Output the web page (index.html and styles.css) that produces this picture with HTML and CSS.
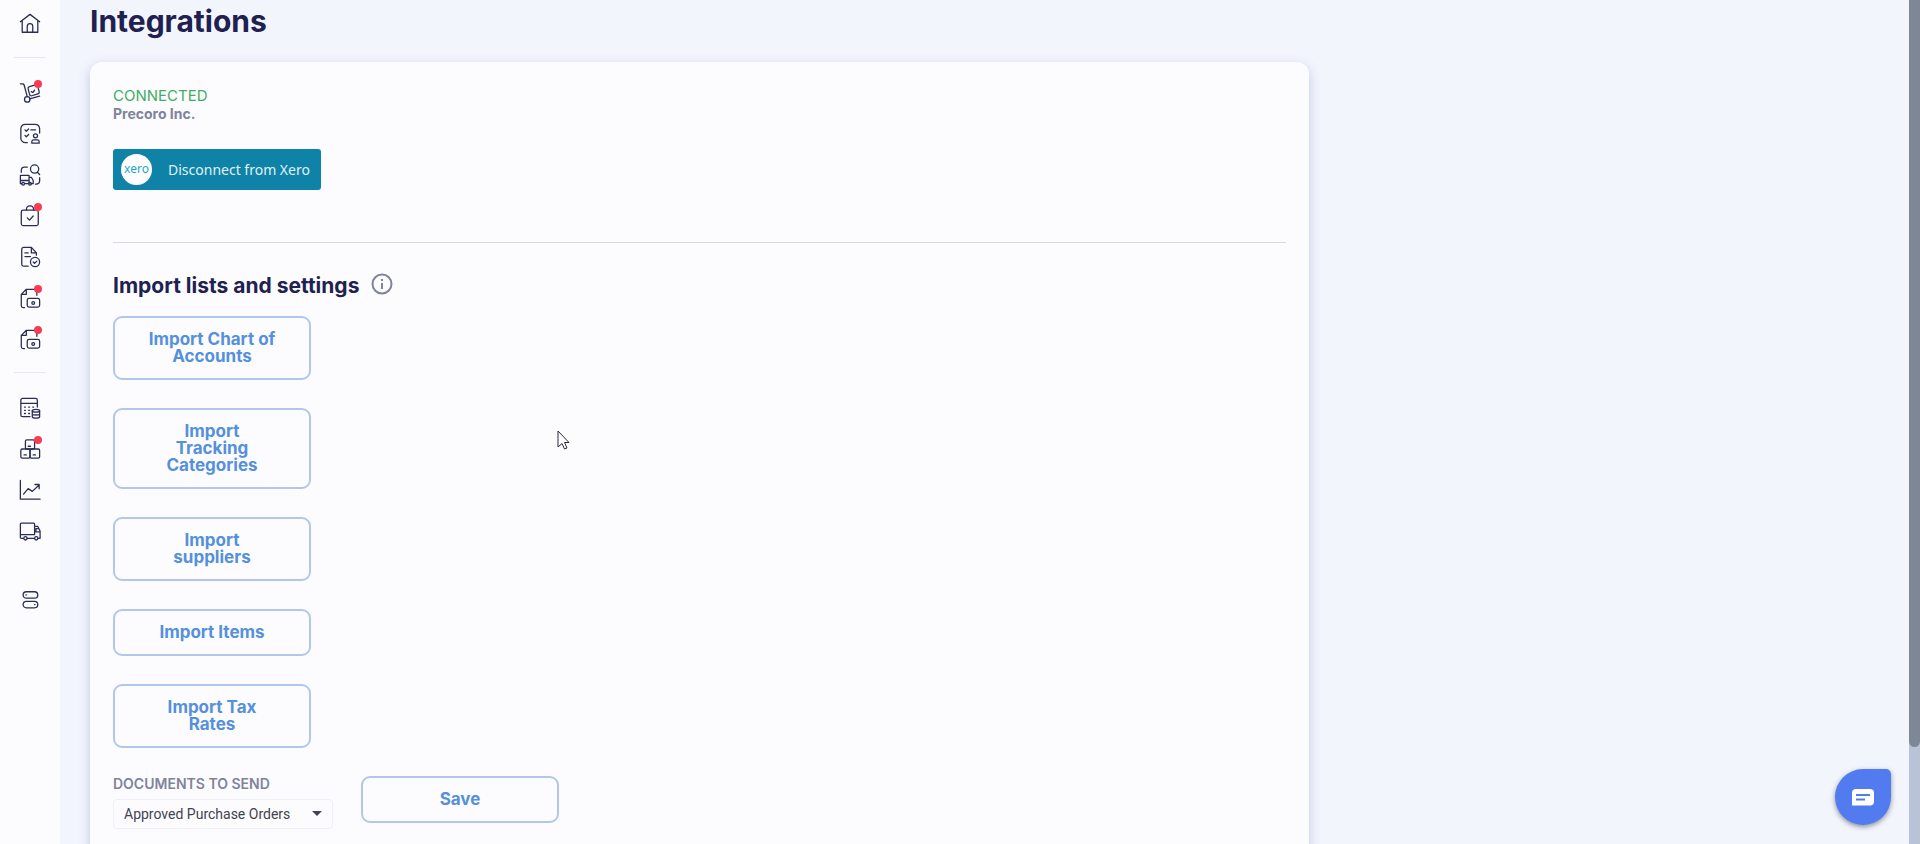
FILE: index.html
```
<!DOCTYPE html>
<html lang="en">
<head>
    <meta charset="UTF-8">
    <title>Integrations</title>
    <link rel="stylesheet" href="styles.css">
</head>
<body>
<div class="layout">

    <!-- Side menu -->
    <nav class="sidebar" aria-label="Main menu">
        <div class="menu-group">
            <a class="menu-link" href="#home" aria-label="Home">
                <svg viewBox="0 0 24 24"><path d="M1.500 9.500 12 1.500l10.500 8M3.500 8.500V21h17V8.500M9 21V14.500a3 3 0 0 1 6 0V21"/></svg>
            </a>
        </div>
        <div class="menu-group">
            <a class="menu-link" href="#requests" aria-label="Purchase requests">
                <svg viewBox="0 0 24 24"><path d="M1.500 2H4a1.500 1.500 0 0 1 1.500 1L9 16M22.500 15.500l-11 3M17 3.500l-5.500 1.500a2 2 0 0 0-1.500 2.500l1.500 6a2 2 0 0 0 2.500 1.500l6.500-2a2 2 0 0 0 1.500-2.500L21 7M13.500 10.500l1.500 1 2-2.500"/><circle cx="9" cy="19" r="3"/></svg>
                <span class="dot"></span>
            </a>
            <a class="menu-link" href="#approvals" aria-label="Approvals">
                <svg viewBox="0 0 24 24"><path d="M9 21.500H7A5 5 0 0 1 2 16.500V6A5 5 0 0 1 7 1.500h10.500a5 5 0 0 1 5 4.500v5M6.500 7.500 8 9l2.500-2.500M6.500 13.500 8 15l2.500-2.500M13 7.500h5"/><circle cx="18" cy="14" r="2.200"/><path d="M14 22v-1.500a2 2 0 0 1 2-2h4a2 2 0 0 1 2 2V22z"/></svg>
            </a>
            <a class="menu-link" href="#sourcing" aria-label="Sourcing">
                <svg viewBox="0 0 24 24"><circle cx="17" cy="5.500" r="4.500"/><path d="M20 9l2.500 2.500M2.500 9V7A3.500 3.500 0 0 1 6 3.500h3M22.500 15v3.500a3.500 3.500 0 0 1-3.500 3.500h-1M3 21.500H1.500v-9H11v9H6.500M11 14.500h2.500l2 3.500v3.500H13M1.500 18H11"/><circle cx="4.500" cy="21.500" r="1.500"/><circle cx="12" cy="21.500" r="1.500"/></svg>
            </a>
            <a class="menu-link" href="#orders" aria-label="Purchase orders">
                <svg viewBox="0 0 24 24"><rect x="2.500" y="5.500" width="18.500" height="17" rx="2"/><path d="M8 5.500C8 3 9 1 12 1s4 2 4 4.500M9 14l2.500 2.500L15.500 12"/></svg>
                <span class="dot"></span>
            </a>
            <a class="menu-link" href="#receipts" aria-label="Receipts">
                <svg viewBox="0 0 24 24"><path d="M10 22H5a2 2 0 0 1-2-2V3.500a2 2 0 0 1 2-2h8.500L19 7.500V10M13.500 2v5.500H19M6.500 7.500H10M6.500 11.500h6"/><circle cx="17.500" cy="17.500" r="5"/><path d="M15.500 17.500l1.500 1.500 2.500-2.500"/></svg>
            </a>
            <a class="menu-link" href="#invoices" aria-label="Invoices">
                <svg viewBox="0 0 24 24"><path d="M6 22.500H4.500a2 2 0 0 1-2-2V8L8 2.500h9.500a2 2 0 0 1 2 2V9M2.500 8H8V3"/><rect x="9" y="12.500" width="13.500" height="9.500" rx="2"/><circle cx="15.500" cy="17.500" r="1.500"/></svg>
                <span class="dot"></span>
            </a>
            <a class="menu-link" href="#expenses" aria-label="Expenses">
                <svg viewBox="0 0 24 24"><path d="M6 22.500H4.500a2 2 0 0 1-2-2V8L8 2.500h9.500a2 2 0 0 1 2 2V9M2.500 8H8V3"/><rect x="9" y="12.500" width="13.500" height="9.500" rx="2"/><circle cx="15.500" cy="17.500" r="1.500"/></svg>
                <span class="dot"></span>
            </a>
        </div>
        <div class="menu-group">
            <a class="menu-link" href="#budgets" aria-label="Budgets">
                <svg viewBox="0 0 24 24"><path d="M12 21.500H4a2 2 0 0 1-2-2V3.500a2 2 0 0 1 2-2h14a2 2 0 0 1 2 2V11M2 7h18M6 11h1M10.500 11h1M15 11h1M6 14.500h1M10.500 14.500h1M6 18h1M10.500 18h1"/><ellipse cx="18.500" cy="15" rx="4" ry="1.500"/><path d="M14.500 15v6.500c0 2 8 2 8 0V15M14.500 18.500c0 1.500 8 1.500 8 0"/></svg>
            </a>
            <a class="menu-link" href="#inventory" aria-label="Inventory">
                <svg viewBox="0 0 24 24"><rect x="7" y="2" width="10" height="10" rx="1.500"/><rect x="2" y="12" width="10" height="10" rx="1.500"/><rect x="12" y="12" width="10.500" height="10" rx="1.500"/><path d="M10 9h2.500M5.500 18.500H8M15.500 18.500H18"/></svg>
                <span class="dot"></span>
            </a>
            <a class="menu-link" href="#reports" aria-label="Reports">
                <svg viewBox="0 0 24 24"><path d="M1.500 1.500V22H23M5 16.500l5-6 4.500 3L22 6.500M17.500 6H22v4.500"/></svg>
            </a>
            <a class="menu-link" href="#suppliers" aria-label="Suppliers">
                <svg viewBox="0 0 24 24"><path d="M4.500 20h-2a1 1 0 0 1-1-1V4.500a1 1 0 0 1 1-1H16a1 1 0 0 1 1 1V16M1.500 16H17M9 20h7.500M17 7h3.500l2.500 5v8h-2M23 13h-4.500V9.500H21"/><circle cx="7" cy="20" r="1.800"/><circle cx="18.800" cy="20" r="1.800"/></svg>
            </a>
        </div>
        <div class="menu-group last">
            <a class="menu-link" href="#settings" aria-label="Configuration">
                <svg viewBox="0 0 24 24"><rect x="4.500" y="3" width="16" height="7" rx="3.500"/><rect x="4.500" y="13.500" width="16" height="7" rx="3.500"/><path d="M7.500 6.500h.500M17 17h.500"/></svg>
            </a>
        </div>
    </nav>

    <!-- Page content -->
    <main class="content">
        <h1 class="title">Integrations</h1>

        <section class="card">
            <div class="status">Connected</div>
            <div class="company">Precoro Inc.</div>
            <button class="xero-btn" type="button">
                <span class="xero-logo">xero</span>
                <span>Disconnect from Xero</span>
            </button>

            <hr class="line">

            <div class="heading">
                <h2>Import lists and settings</h2>
                <svg class="info" viewBox="0 0 22 22"><circle cx="11" cy="11" r="9.500"/><path d="M11 10v6M11 6v2"/></svg>
            </div>

            <div class="imports">
                <button class="btn" type="button">Import Chart of Accounts</button>
                <button class="btn" type="button">Import Tracking Categories</button>
                <button class="btn" type="button">Import suppliers</button>
                <button class="btn" type="button">Import Items</button>
                <button class="btn" type="button">Import Tax Rates</button>
            </div>

            <form class="documents">
                <div class="field">
                    <label for="documents">Documents to send</label>
                    <div class="select-box">
                        <select id="documents">
                            <option>Approved Purchase Orders</option>
                        </select>
                        <svg class="arrow" viewBox="0 0 10 5"><path d="M0 0h10L5 5z"/></svg>
                    </div>
                </div>
                <button class="btn" type="button">Save</button>
            </form>
        </section>
    </main>

    <div class="scrollbar"><div class="thumb"></div></div>
</div>

<!-- Chat widget -->
<button class="chat" type="button" aria-label="Open chat">
    <svg viewBox="0 0 22 17"><path class="bubble" d="M4 0h14a4 4 0 0 1 4 4v8.500a4 4 0 0 1-4 4H0V4a4 4 0 0 1 4-4z"/><path class="lines" d="M4 6h14M4 10.500h9"/></svg>
</button>

<!-- Mouse pointer -->
<svg class="pointer" viewBox="0 0 13 20"><path d="M1 1v16l4-3.500L7.500 19l2.500-1-2.500-5.500H12z"/></svg>
</body>
</html>
```

FILE: styles.css
```
/* === Global Styles === */
* {
    box-sizing: border-box;
}

body {
    margin: 0;
    background: #f3f5fd;
    color: #1f2150;
    font-family: Inter, "Liberation Sans", sans-serif;
}

button,
select {
    font-family: inherit;
    cursor: pointer;
}

.layout {
    display: flex;
    height: 100vh;
    overflow: hidden;
}

/* === Side menu === */
.sidebar {
    width: 60px;
    flex-shrink: 0;
    padding-top: 3px;
    background: #fcfcfe;
}

.menu-group {
    display: flex;
    flex-direction: column;
    align-items: center;
    padding-bottom: 13px;
}

.menu-group + .menu-group {
    padding-top: 14px;
}

/* short divider above each group */
.menu-group + .menu-group::before {
    content: "";
    width: 32px;
    height: 1px;
    margin: -14px 0 14px;
    background: #e6e7f6;
}

.menu-group.last::before {
    visibility: hidden;
}

.menu-link {
    position: relative;
    display: flex;
    align-items: center;
    justify-content: center;
    width: 41px;
    height: 41px;
}

.menu-link svg {
    width: 22px;
    height: 22px;
    fill: none;
    stroke: #2a2c52;
    stroke-width: 1.4;
    stroke-linecap: round;
    stroke-linejoin: round;
}

.dot {
    position: absolute;
    top: 8px;
    right: 9px;
    width: 8px;
    height: 8px;
    border-radius: 50%;
    background: #f93c54;
}

/* === Content === */
.content {
    flex: 1;
    padding: 3px 30px 0;
}

.title {
    margin: 0 0 23px;
    font-size: 30px;
    line-height: 36px;
    font-weight: 700;
}

.card {
    max-width: 1219px;
    min-height: 100vh;
    padding: 24px 23px;
    border-radius: 12px;
    background: #fcfcfe;
    box-shadow: 0 4px 12px rgba(90, 95, 170, 0.3);
}

.status {
    color: #3fae5f;
    font-size: 15px;
    line-height: 19px;
    text-transform: uppercase;
}

.company {
    color: #80839c;
    font-size: 14px;
    line-height: 18px;
    font-weight: 700;
}

/* === Xero button === */
.xero-btn {
    display: flex;
    align-items: center;
    gap: 16px;
    min-width: 208px;
    height: 41px;
    margin-top: 26px;
    padding: 0 8px;
    border: none;
    border-radius: 3px;
    background: #0f82a8;
    color: #e0f1f6;
    font-family: "Noto Sans", sans-serif;
    font-size: 14px;
}

.xero-logo {
    width: 31px;
    height: 31px;
    border-radius: 50%;
    background: #ffffff;
    color: #1ba6cc;
    font-size: 12px;
    line-height: 29px;
    text-align: center;
}

.line {
    margin: 52px 0 30px;
    border: none;
    border-top: 1px solid #d9dae6;
}

.heading {
    display: flex;
    gap: 12px;
    margin-bottom: 17px;
}

.heading h2 {
    margin: 0;
    font-size: 21px;
    line-height: 26px;
    font-weight: 700;
}

.info {
    width: 22px;
    height: 22px;
    fill: none;
    stroke: #80839c;
    stroke-width: 2;
}

/* === Outlined buttons === */
.imports {
    display: flex;
    flex-direction: column;
    align-items: flex-start;
    gap: 28px;
}

.btn {
    width: 198px;
    padding: 13px 32px;
    border: 2px solid #b3c8e8;
    border-radius: 9px;
    background: transparent;
    color: #5590dc;
    font-size: 17px;
    line-height: 17px;
    font-weight: 700;
}

/* === Documents to send === */
.documents {
    display: flex;
    align-items: flex-start;
    gap: 28px;
    margin-top: 28px;
}

.field {
    width: 220px;
}

.field label {
    display: block;
    margin-bottom: 8px;
    color: #80839c;
    font-size: 14px;
    line-height: 15px;
    font-weight: 600;
    text-transform: uppercase;
}

.select-box {
    position: relative;
}

.select-box select {
    width: 100%;
    height: 30px;
    padding: 0 10px;
    appearance: none;
    border: 1px solid #f0f0fa;
    border-radius: 4px;
    background: transparent;
    color: #42434f;
    font-family: Roboto, sans-serif;
    font-size: 14px;
}

.arrow {
    position: absolute;
    top: 12px;
    right: 11px;
    width: 10px;
    height: 5px;
    fill: #42434f;
    pointer-events: none;
}

/* === Scrollbar === */
.scrollbar {
    width: 11px;
    background: #b9c3d8;
}

.thumb {
    height: 747px;
    border-radius: 0 0 6px 6px;
    background: #7e8795;
}

/* === Chat widget === */
.chat {
    position: fixed;
    right: 29px;
    bottom: 19px;
    display: flex;
    align-items: center;
    justify-content: center;
    width: 56px;
    height: 56px;
    padding: 0;
    border: none;
    border-radius: 28px 5px 28px 28px;
    background: #527bf0;
    box-shadow: 0 2px 5px rgba(40, 40, 60, 0.5);
}

.chat svg {
    width: 22px;
    height: 17px;
}

.bubble {
    fill: #ffffff;
}

.lines {
    stroke: #527bf0;
    stroke-width: 2;
}

/* === Mouse pointer === */
.pointer {
    position: fixed;
    top: 430px;
    left: 557px;
    width: 13px;
    height: 20px;
    fill: #ffffff;
    stroke: #26263a;
    stroke-width: 1;
    pointer-events: none;
}
```
